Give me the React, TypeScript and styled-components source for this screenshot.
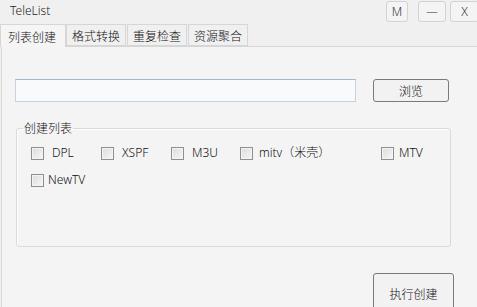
import React from "react";
import styled, { createGlobalStyle } from "styled-components";

const GlobalStyle = createGlobalStyle`
  html, body {
    margin: 0;
    padding: 0;
    background: #f0f0f0;
  }
  * {
    box-sizing: border-box;
  }
`;

const tabs = ["列表创建", "格式转换", "重复检查", "资源聚合"];

const formats = [
  [
    { label: "DPL", width: 70, gap: 8 },
    { label: "XSPF", width: 70, gap: 8 },
    { label: "M3U", width: 69, gap: 8 },
    { label: "mitv（米壳）", width: 141, gap: 6 },
    { label: "MTV", width: 50, gap: 5 },
  ],
  [{ label: "NewTV", width: 70, gap: 4 }],
];

export default function App() {
  return (
    <>
      <GlobalStyle />
      <Window>
        <TitleBar>
          <Title>TeleList</Title>
          <Controls>
            <CtrlButton $w={22}>M</CtrlButton>
            <CtrlButton $w={28} $ml={10}>
              —
            </CtrlButton>
            <CtrlButton $w={29} $ml={4}>
              X
            </CtrlButton>
          </Controls>
        </TitleBar>

        <TabBar>
          {tabs.map((t, i) => (
            <Tab key={t} $active={i === 0}>
              {t}
            </Tab>
          ))}
        </TabBar>

        <Panel>
          <PathRow>
            <PathInput />
            <Button $w={76} $h={23}>
              浏览
            </Button>
          </PathRow>

          <Group>
            <Legend>创建列表</Legend>
            {formats.map((row, ri) => (
              <CheckRow key={ri}>
                {row.map((f) => (
                  <CheckItem key={f.label} $w={f.width} $gap={f.gap}>
                    <Box />
                    <span>{f.label}</span>
                  </CheckItem>
                ))}
              </CheckRow>
            ))}
          </Group>

          <Footer>
            <Button $w={81} $h={40}>
              执行创建
            </Button>
          </Footer>
        </Panel>
      </Window>
    </>
  );
}

const Window = styled.div`
  width: 477px;
  height: 307px;
  overflow: hidden;
  display: flex;
  flex-direction: column;
  background: #f0f0f0;
  font-family: "Noto Sans", "Noto Sans CJK SC", sans-serif;
  font-size: 12px;
  font-weight: 300;
  color: #1a1a1a;
`;

const TitleBar = styled.div`
  height: 24px;
  display: flex;
  align-items: flex-start;
  flex-shrink: 0;
`;

const Title = styled.div`
  padding: 2px 0 0 10px;
  line-height: 17px;
  color: #222;
`;

const Controls = styled.div`
  margin-left: auto;
  margin-right: -2px;
  padding-top: 1px;
  display: flex;
`;

const CtrlButton = styled.div<{ $w: number; $ml?: number }>`
  width: ${(p) => p.$w}px;
  height: 21px;
  margin-left: ${(p) => p.$ml ?? 0}px;
  display: flex;
  align-items: center;
  justify-content: center;
  border: 1px solid #d2d2d2;
  border-radius: 3px;
  background: #f4f4f4;
  font-size: 12px;
  color: #333;
`;

const TabBar = styled.div`
  height: 23px;
  display: flex;
  align-items: flex-end;
  border-bottom: 1px solid #d6d6d6;
  flex-shrink: 0;
`;

const Tab = styled.div<{ $active: boolean }>`
  height: ${(p) => (p.$active ? 23 : 22)}px;
  margin-bottom: ${(p) => (p.$active ? -1 : 0)}px;
  padding: 0 ${(p) => (p.$active ? 9 : 5)}px 0 ${(p) => (p.$active ? 7 : 5)}px;
  margin-right: ${(p) => (p.$active ? 0 : 1)}px;
  display: flex;
  align-items: center;
  border: 1px solid #d6d6d6;
  border-bottom: ${(p) => (p.$active ? "none" : "1px solid #d6d6d6")};
  background: ${(p) => (p.$active ? "#f5f5f5" : "#f0f0f0")};
  color: #111;
  font-size: 12px;
  font-family: "Noto Sans CJK SC", sans-serif;
`;

const Panel = styled.div`
  flex: 1;
  margin-left: 1px;
  border-left: 1px solid #d8d8d8;
  background: #f4f4f4;
  padding-left: 13px;
  display: flex;
  flex-direction: column;
  align-items: flex-start;
`;

const PathRow = styled.div`
  margin-top: 32px;
  display: flex;
  align-items: flex-start;
  gap: 17px;
`;

const PathInput = styled.div`
  width: 341px;
  height: 23px;
  border: 1px solid #c9d3de;
  border-top-color: #a8b8cc;
  background: #f8fafc;
`;

const Button = styled.div<{ $w: number; $h: number }>`
  width: ${(p) => p.$w}px;
  height: ${(p) => p.$h}px;
  flex-shrink: 0;
  display: flex;
  align-items: center;
  justify-content: center;
  border: 1px solid #7a7a7a;
  border-radius: 3px;
  background: #f2f2f2;
  font-family: "Noto Sans CJK SC", sans-serif;
  font-size: 12px;
  color: #111;
`;

const Group = styled.fieldset`
  margin: 18px 0 0 1px;
  width: 435px;
  height: 127px;
  padding: 0 6px;
  border: 1px solid #dadada;
  border-radius: 3px;
  box-shadow: inset 1px 1px 0 #fdfdfd;
  display: flex;
  flex-direction: column;
  gap: 10px;
`;

const Legend = styled.legend`
  padding: 0 1px;
  line-height: 16px;
  font-family: "Noto Sans CJK SC", sans-serif;
  font-size: 12px;
  color: #111;
`;

const CheckRow = styled.div`
  display: flex;
  padding-left: 8px;
  margin-top: 1px;
  &:first-of-type {
    margin-top: 9px;
  }
`;

const CheckItem = styled.label<{ $w: number; $gap: number }>`
  width: ${(p) => p.$w}px;
  height: 16px;
  flex-shrink: 0;
  display: flex;
  align-items: center;
  gap: ${(p) => p.$gap}px;
  white-space: nowrap;
  font-size: 12px;
  line-height: 16px;
  color: #111;
`;

const Box = styled.span`
  width: 13px;
  height: 13px;
  flex-shrink: 0;
  border: 1px solid #8e8f8f;
  background: linear-gradient(135deg, #dcdcdc, #f6f6f6);
  box-shadow: inset 0 0 0 1px #f4f4f4;
`;

const Footer = styled.div`
  margin: 26px 0 0 358px;
  display: flex;
`;
